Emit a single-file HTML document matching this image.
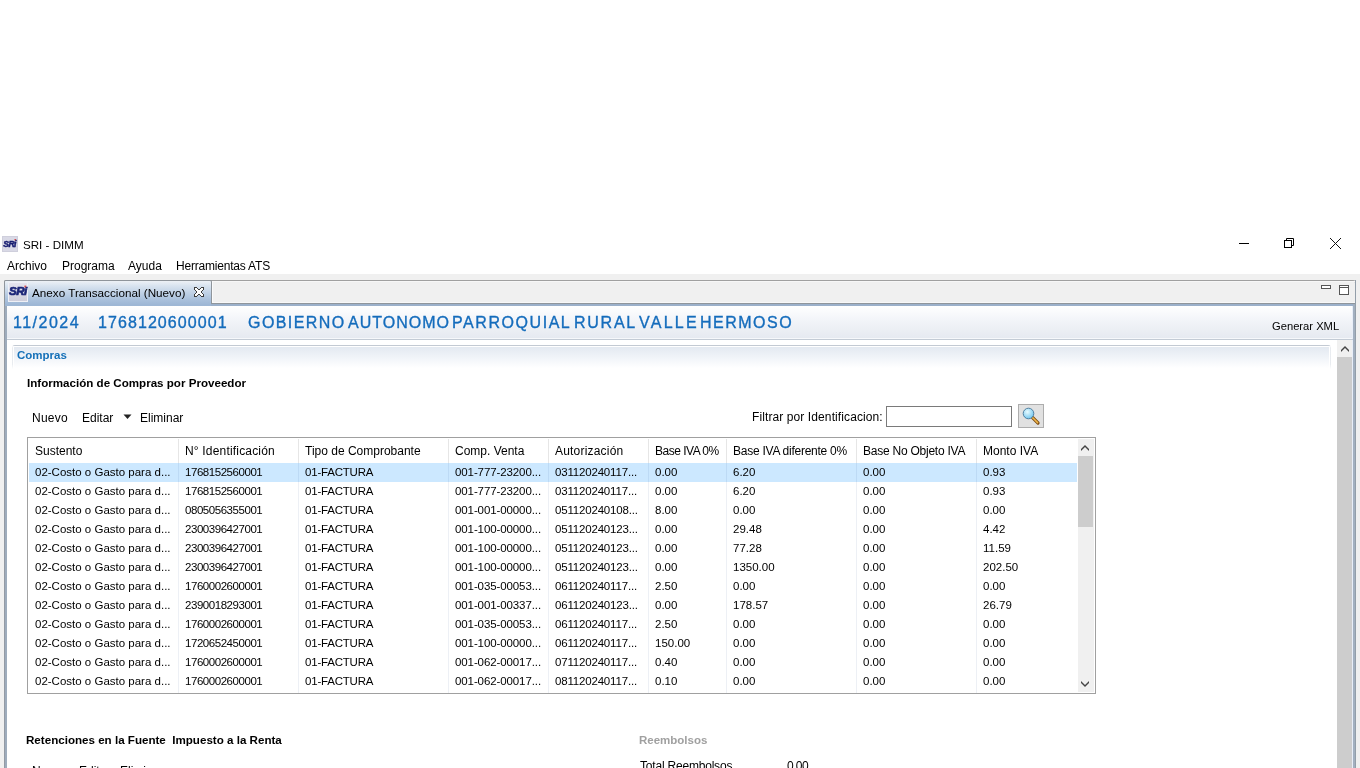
<!DOCTYPE html>
<html><head><meta charset="utf-8">
<style>
*{box-sizing:border-box;margin:0;padding:0}
html,body{width:1360px;height:768px;overflow:hidden;background:#fff}
.a,.cell,.hcell{will-change:transform}
body{position:relative;font-family:"Liberation Sans",sans-serif;font-size:12px;color:#000}
.a{position:absolute;white-space:pre;line-height:1}
.r{position:absolute}
.hw{top:315px;font-size:16px;color:#146cbc;letter-spacing:1px;-webkit-text-stroke:0.35px #146cbc}
#vscroll{position:absolute;left:1337px;top:340px;width:15px;height:428px;background:#f0f0f0}
#vthumb{position:absolute;left:1337px;top:357px;width:15px;height:411px;background:#cdcdcd}
.tbl{position:absolute;left:27px;top:437px;width:1069px;height:257px;border:1px solid #a0a0a0;background:#fff;overflow:hidden}
.row{position:absolute;left:1px;width:1048px;height:19px}
.sel{background:#cce8ff}
.cell{position:absolute;top:3px;font-size:11.5px;white-space:pre;line-height:13px}
.thead{position:absolute;left:0;top:0;width:1049px;height:25px;background:#fff}
.hcell{position:absolute;top:7px;font-size:12px;white-space:pre;line-height:13px}
.vsep{position:absolute;top:0;width:1px;height:255px;background:rgba(0,40,120,0.07)}
.hsep{position:absolute;top:1px;width:1px;height:24px;background:#e6e6e6}
.tscroll{position:absolute;left:1050px;top:1px;width:16px;height:253px;background:#f0f0f0}
.tthumb{position:absolute;left:0;top:17px;width:15px;height:71px;background:#cdcdcd}
</style></head><body>
<!-- title bar -->
<svg class="a" style="left:2px;top:236px" width="16" height="16" viewBox="0 0 16 16">
 <rect x="0" y="0" width="16" height="16" fill="#cfcfdc"/>
 <rect x="1" y="1" width="14" height="14" fill="#d9d9e6"/>
 <text x="7.6" y="10.6" text-anchor="middle" font-family="Liberation Sans" font-weight="bold" font-style="italic" font-size="8.6" fill="#161c70" stroke="#161c70" stroke-width="0.5" letter-spacing="-0.5">SRi</text>
 <rect x="12.5" y="3" width="1.4" height="1.4" fill="#d04040"/>
</svg>
<div class="a" style="left:23px;top:239px;font-size:11.6px">SRI - DIMM</div>
<svg class="a" style="left:1230px;top:232px" width="130" height="22" viewBox="0 0 130 22">
 <rect x="9" y="11" width="10" height="1" fill="#000"/>
 <rect x="54.5" y="8.5" width="7" height="7" fill="none" stroke="#000"/>
 <path d="M56.5 8.5V6.5H63.5V13.5H61.5" fill="none" stroke="#000"/>
 <g fill="#111" shape-rendering="crispEdges"><rect x="100" y="6" width="1" height="1"/><rect x="110" y="6" width="1" height="1"/><rect x="101" y="7" width="1" height="1"/><rect x="109" y="7" width="1" height="1"/><rect x="102" y="8" width="1" height="1"/><rect x="108" y="8" width="1" height="1"/><rect x="103" y="9" width="1" height="1"/><rect x="107" y="9" width="1" height="1"/><rect x="104" y="10" width="1" height="1"/><rect x="106" y="10" width="1" height="1"/><rect x="105" y="11" width="1" height="1"/><rect x="105" y="11" width="1" height="1"/><rect x="106" y="12" width="1" height="1"/><rect x="104" y="12" width="1" height="1"/><rect x="107" y="13" width="1" height="1"/><rect x="103" y="13" width="1" height="1"/><rect x="108" y="14" width="1" height="1"/><rect x="102" y="14" width="1" height="1"/><rect x="109" y="15" width="1" height="1"/><rect x="101" y="15" width="1" height="1"/><rect x="110" y="16" width="1" height="1"/><rect x="100" y="16" width="1" height="1"/></g>
</svg>
<!-- menu -->
<div class="a" style="left:7px;top:260px">Archivo</div>
<div class="a" style="left:62px;top:260px">Programa</div>
<div class="a" style="left:128px;top:260px">Ayuda</div>
<div class="a" style="left:176px;top:260px;letter-spacing:-0.2px">Herramientas ATS</div>

<div class="r" style="left:0;top:274px;width:1360px;height:494px;background:#f0f0f0"></div>
<!-- folder outline -->
<div class="r" style="left:4px;top:280px;width:1352px;height:488px;border:1px solid #a0a0a0;border-bottom:none;border-radius:2px 3px 0 0;background:#f0f0f0"></div>
<div class="r" style="left:5px;top:281px;width:1350px;height:1px;background:#f7f7f7"></div>
<div class="r" style="left:212px;top:281px;width:1px;height:22px;background:#fafafa"></div>
<div class="r" style="left:212px;top:302px;width:1143px;height:1px;background:#f8f8f8"></div>
<div class="r" style="left:5px;top:303px;width:1350px;height:1px;background:#8f959b"></div>
<div class="r" style="left:5px;top:304px;width:1350px;height:2px;background:#9bb0ca"></div>
<div class="r" style="left:4px;top:304px;width:1px;height:464px;background:#939aa4"></div>
<div class="r" style="left:5px;top:304px;width:2px;height:464px;background:#9eacbc"></div>
<div class="r" style="left:1355px;top:280px;width:1px;height:488px;background:#939ea9"></div>
<div class="r" style="left:1353px;top:304px;width:2px;height:464px;background:#a3b0c0"></div>
<div class="r" style="left:1352px;top:306px;width:1px;height:462px;background:#e8eef8"></div>
<!-- tab -->
<div class="r" style="left:4px;top:280px;width:208px;height:24px;border:1px solid #8f959b;border-bottom:none;border-radius:2px 2px 0 0;background:linear-gradient(#edf1f6,#d8e3ef 22%,#c3d4e7 48%,#aac1dc 80%,#9fb8d6)"></div>
<div class="r" style="left:5px;top:304px;width:206px;height:2px;background:#9eb7d5"></div>
<svg class="a" style="left:8px;top:282px" width="20" height="20" viewBox="0 0 20 20">
 <defs><linearGradient id="icog" x1="0" y1="0" x2="0" y2="1"><stop offset="0" stop-color="#e4e4ee"/><stop offset="1" stop-color="#cfcfdc"/></linearGradient></defs>
 <rect x="0" y="0" width="20" height="20" fill="#eef0f6"/>
 <rect x="1" y="1" width="18" height="18" fill="url(#icog)"/>
 <text x="9.8" y="13.4" text-anchor="middle" font-family="Liberation Sans" font-weight="bold" font-style="italic" font-size="11.5" fill="#1c2678" stroke="#1c2678" stroke-width="0.7" letter-spacing="-0.6">SRi</text>
 <rect x="16.4" y="3.6" width="1.8" height="1.8" fill="#d84848"/>
</svg>
<div class="a" style="left:32px;top:287px;font-size:11.7px">Anexo Transaccional (Nuevo)</div>
<svg class="a" style="left:194px;top:287px" width="10" height="10" viewBox="0 0 10 10" shape-rendering="crispEdges"><rect x="0" y="0" width="1" height="1" fill="#3c3c3c"/><rect x="1" y="0" width="1" height="1" fill="#3c3c3c"/><rect x="2" y="0" width="1" height="1" fill="#3c3c3c"/><rect x="7" y="0" width="1" height="1" fill="#3c3c3c"/><rect x="8" y="0" width="1" height="1" fill="#3c3c3c"/><rect x="9" y="0" width="1" height="1" fill="#3c3c3c"/><rect x="0" y="1" width="1" height="1" fill="#3c3c3c"/><rect x="1" y="1" width="1" height="1" fill="#fff"/><rect x="2" y="1" width="1" height="1" fill="#fff"/><rect x="3" y="1" width="1" height="1" fill="#3c3c3c"/><rect x="6" y="1" width="1" height="1" fill="#3c3c3c"/><rect x="7" y="1" width="1" height="1" fill="#fff"/><rect x="8" y="1" width="1" height="1" fill="#fff"/><rect x="9" y="1" width="1" height="1" fill="#3c3c3c"/><rect x="0" y="2" width="1" height="1" fill="#3c3c3c"/><rect x="1" y="2" width="1" height="1" fill="#fff"/><rect x="2" y="2" width="1" height="1" fill="#fff"/><rect x="3" y="2" width="1" height="1" fill="#fff"/><rect x="4" y="2" width="1" height="1" fill="#3c3c3c"/><rect x="5" y="2" width="1" height="1" fill="#3c3c3c"/><rect x="6" y="2" width="1" height="1" fill="#fff"/><rect x="7" y="2" width="1" height="1" fill="#fff"/><rect x="8" y="2" width="1" height="1" fill="#fff"/><rect x="9" y="2" width="1" height="1" fill="#3c3c3c"/><rect x="1" y="3" width="1" height="1" fill="#3c3c3c"/><rect x="2" y="3" width="1" height="1" fill="#fff"/><rect x="3" y="3" width="1" height="1" fill="#fff"/><rect x="4" y="3" width="1" height="1" fill="#fff"/><rect x="5" y="3" width="1" height="1" fill="#fff"/><rect x="6" y="3" width="1" height="1" fill="#fff"/><rect x="7" y="3" width="1" height="1" fill="#fff"/><rect x="8" y="3" width="1" height="1" fill="#3c3c3c"/><rect x="2" y="4" width="1" height="1" fill="#3c3c3c"/><rect x="3" y="4" width="1" height="1" fill="#fff"/><rect x="4" y="4" width="1" height="1" fill="#fff"/><rect x="5" y="4" width="1" height="1" fill="#fff"/><rect x="6" y="4" width="1" height="1" fill="#fff"/><rect x="7" y="4" width="1" height="1" fill="#3c3c3c"/><rect x="2" y="5" width="1" height="1" fill="#3c3c3c"/><rect x="3" y="5" width="1" height="1" fill="#fff"/><rect x="4" y="5" width="1" height="1" fill="#fff"/><rect x="5" y="5" width="1" height="1" fill="#fff"/><rect x="6" y="5" width="1" height="1" fill="#fff"/><rect x="7" y="5" width="1" height="1" fill="#3c3c3c"/><rect x="1" y="6" width="1" height="1" fill="#3c3c3c"/><rect x="2" y="6" width="1" height="1" fill="#fff"/><rect x="3" y="6" width="1" height="1" fill="#fff"/><rect x="4" y="6" width="1" height="1" fill="#fff"/><rect x="5" y="6" width="1" height="1" fill="#fff"/><rect x="6" y="6" width="1" height="1" fill="#fff"/><rect x="7" y="6" width="1" height="1" fill="#fff"/><rect x="8" y="6" width="1" height="1" fill="#3c3c3c"/><rect x="0" y="7" width="1" height="1" fill="#3c3c3c"/><rect x="1" y="7" width="1" height="1" fill="#fff"/><rect x="2" y="7" width="1" height="1" fill="#fff"/><rect x="3" y="7" width="1" height="1" fill="#fff"/><rect x="4" y="7" width="1" height="1" fill="#3c3c3c"/><rect x="5" y="7" width="1" height="1" fill="#3c3c3c"/><rect x="6" y="7" width="1" height="1" fill="#fff"/><rect x="7" y="7" width="1" height="1" fill="#fff"/><rect x="8" y="7" width="1" height="1" fill="#fff"/><rect x="9" y="7" width="1" height="1" fill="#3c3c3c"/><rect x="0" y="8" width="1" height="1" fill="#3c3c3c"/><rect x="1" y="8" width="1" height="1" fill="#fff"/><rect x="2" y="8" width="1" height="1" fill="#fff"/><rect x="3" y="8" width="1" height="1" fill="#3c3c3c"/><rect x="6" y="8" width="1" height="1" fill="#3c3c3c"/><rect x="7" y="8" width="1" height="1" fill="#fff"/><rect x="8" y="8" width="1" height="1" fill="#fff"/><rect x="9" y="8" width="1" height="1" fill="#3c3c3c"/><rect x="0" y="9" width="1" height="1" fill="#3c3c3c"/><rect x="1" y="9" width="1" height="1" fill="#3c3c3c"/><rect x="2" y="9" width="1" height="1" fill="#3c3c3c"/><rect x="7" y="9" width="1" height="1" fill="#3c3c3c"/><rect x="8" y="9" width="1" height="1" fill="#3c3c3c"/><rect x="9" y="9" width="1" height="1" fill="#3c3c3c"/></svg>
<svg class="a" style="left:1320px;top:284px" width="30" height="12" viewBox="0 0 30 12">
 <rect x="1.5" y="1.5" width="9" height="3" fill="#fff" stroke="#555" stroke-width="1"/>
 <rect x="19.5" y="1.5" width="9" height="9" fill="#fff" stroke="#555" stroke-width="1"/>
 <rect x="19.5" y="3" width="9" height="1" fill="#555"/>
</svg>
<!-- content -->
<div class="r" style="left:7px;top:306px;width:1345px;height:462px;background:#fff"></div>
<div class="r" style="left:7px;top:306px;width:1345px;height:33px;background:linear-gradient(#ffffff,#f3f5f9 40%,#e5e9f0)"></div>
<div class="r" style="left:7px;top:338px;width:1345px;height:1px;background:#f6f8fb"></div><div class="r" style="left:7px;top:339px;width:1346px;height:1px;background:#c3cbd5"></div>
<div class="a hw" style="left:13px;letter-spacing:1.50px">11/2024</div>
<div class="a hw" style="left:98px;letter-spacing:1.08px">1768120600001</div>
<div class="a hw" style="left:248px;letter-spacing:1.43px">GOBIERNO</div>
<div class="a hw" style="left:348px;letter-spacing:1.00px">AUTONOMO</div>
<div class="a hw" style="left:452px;letter-spacing:1.56px">PARROQUIAL</div>
<div class="a hw" style="left:574px;letter-spacing:1.75px">RURAL</div>
<div class="a hw" style="left:639px;letter-spacing:2.25px">VALLE</div>
<div class="a hw" style="left:700px;letter-spacing:1.50px">HERMOSO</div>
<div class="a" style="left:1272px;top:321px;font-size:11.2px">Generar XML</div>

<div class="r" style="left:12px;top:345px;width:1319px;height:24px;border-top:1px solid #c3cad3;border-radius:3px 3px 0 0;background:linear-gradient(90deg,#d2d8e0,rgba(255,255,255,0) 1px,rgba(255,255,255,0) calc(100% - 1px),#d2d8e0)"></div>
<div class="r" style="left:12px;top:346px;width:1319px;height:23px;background:linear-gradient(#fff,rgba(255,255,255,0) 2px,rgba(255,255,255,0) 18px,#fff)"></div>
<div class="r" style="left:14px;top:347px;width:1315px;height:21px;background:linear-gradient(#e3e9f1,#f3f6fa 60%,#fff)"></div>
<div class="a" style="left:17px;top:350px;font-size:11.5px;font-weight:bold;color:#1570b8">Compras</div>
<div class="a" style="left:27px;top:377px;font-size:11.6px;font-weight:bold">Información de Compras por Proveedor</div>


<div class="a" style="left:32px;top:412px;letter-spacing:0.25px">Nuevo</div>
<div class="a" style="left:82px;top:412px">Editar</div>
<svg class="a" style="left:123px;top:414px" width="9" height="6" viewBox="0 0 9 6"><path d="M0.5 0.5H8.5L4.5 5Z" fill="#222"/></svg>
<div class="a" style="left:140px;top:412px">Eliminar</div>
<div class="a" style="left:752px;top:411px;letter-spacing:0.1px">Filtrar por Identificacion:</div>
<div style="position:absolute;left:886px;top:406px;width:126px;height:21px;border:1px solid #7a7a7a;background:#fff"></div>
<div style="position:absolute;left:1018px;top:404px;width:26px;height:24px;border:1px solid #adadad;background:#e1e1e1"></div>
<svg class="a" style="left:1018px;top:404px" width="26" height="24" viewBox="0 0 26 24">
 <defs><radialGradient id="lens" cx="0.4" cy="0.35" r="0.7"><stop offset="0" stop-color="#e8fbff"/><stop offset="1" stop-color="#6cc4ee"/></radialGradient></defs>
 <path d="M14.5 13.5L20 19" stroke="#7a4a10" stroke-width="3.2" stroke-linecap="round"/>
 <path d="M14.8 13.8L19.6 18.6" stroke="#f0b64a" stroke-width="1.6" stroke-linecap="round"/>
 <circle cx="10.5" cy="9.5" r="5.3" fill="url(#lens)" stroke="#4f7fa0" stroke-width="1"/>
</svg>
<div class="tbl">
<div class="row sel" style="top:25px"><div class="cell" style="left:6px">02-Costo o Gasto para d...</div><div class="cell" style="left:156px;letter-spacing:-0.45px">1768152560001</div><div class="cell" style="left:276px;letter-spacing:-0.2px">01-FACTURA</div><div class="cell" style="left:426px;letter-spacing:-0.1px">001-777-23200...</div><div class="cell" style="left:526px;letter-spacing:-0.18px">031120240117...</div><div class="cell" style="left:626px">0.00</div><div class="cell" style="left:704px">6.20</div><div class="cell" style="left:834px">0.00</div><div class="cell" style="left:954px">0.93</div></div>
<div class="row" style="top:44px"><div class="cell" style="left:6px">02-Costo o Gasto para d...</div><div class="cell" style="left:156px;letter-spacing:-0.45px">1768152560001</div><div class="cell" style="left:276px;letter-spacing:-0.2px">01-FACTURA</div><div class="cell" style="left:426px;letter-spacing:-0.1px">001-777-23200...</div><div class="cell" style="left:526px;letter-spacing:-0.18px">031120240117...</div><div class="cell" style="left:626px">0.00</div><div class="cell" style="left:704px">6.20</div><div class="cell" style="left:834px">0.00</div><div class="cell" style="left:954px">0.93</div></div>
<div class="row" style="top:63px"><div class="cell" style="left:6px">02-Costo o Gasto para d...</div><div class="cell" style="left:156px;letter-spacing:-0.45px">0805056355001</div><div class="cell" style="left:276px;letter-spacing:-0.2px">01-FACTURA</div><div class="cell" style="left:426px;letter-spacing:-0.1px">001-001-00000...</div><div class="cell" style="left:526px;letter-spacing:-0.18px">051120240108...</div><div class="cell" style="left:626px">8.00</div><div class="cell" style="left:704px">0.00</div><div class="cell" style="left:834px">0.00</div><div class="cell" style="left:954px">0.00</div></div>
<div class="row" style="top:82px"><div class="cell" style="left:6px">02-Costo o Gasto para d...</div><div class="cell" style="left:156px;letter-spacing:-0.45px">2300396427001</div><div class="cell" style="left:276px;letter-spacing:-0.2px">01-FACTURA</div><div class="cell" style="left:426px;letter-spacing:-0.1px">001-100-00000...</div><div class="cell" style="left:526px;letter-spacing:-0.18px">051120240123...</div><div class="cell" style="left:626px">0.00</div><div class="cell" style="left:704px">29.48</div><div class="cell" style="left:834px">0.00</div><div class="cell" style="left:954px">4.42</div></div>
<div class="row" style="top:101px"><div class="cell" style="left:6px">02-Costo o Gasto para d...</div><div class="cell" style="left:156px;letter-spacing:-0.45px">2300396427001</div><div class="cell" style="left:276px;letter-spacing:-0.2px">01-FACTURA</div><div class="cell" style="left:426px;letter-spacing:-0.1px">001-100-00000...</div><div class="cell" style="left:526px;letter-spacing:-0.18px">051120240123...</div><div class="cell" style="left:626px">0.00</div><div class="cell" style="left:704px">77.28</div><div class="cell" style="left:834px">0.00</div><div class="cell" style="left:954px">11.59</div></div>
<div class="row" style="top:120px"><div class="cell" style="left:6px">02-Costo o Gasto para d...</div><div class="cell" style="left:156px;letter-spacing:-0.45px">2300396427001</div><div class="cell" style="left:276px;letter-spacing:-0.2px">01-FACTURA</div><div class="cell" style="left:426px;letter-spacing:-0.1px">001-100-00000...</div><div class="cell" style="left:526px;letter-spacing:-0.18px">051120240123...</div><div class="cell" style="left:626px">0.00</div><div class="cell" style="left:704px">1350.00</div><div class="cell" style="left:834px">0.00</div><div class="cell" style="left:954px">202.50</div></div>
<div class="row" style="top:139px"><div class="cell" style="left:6px">02-Costo o Gasto para d...</div><div class="cell" style="left:156px;letter-spacing:-0.45px">1760002600001</div><div class="cell" style="left:276px;letter-spacing:-0.2px">01-FACTURA</div><div class="cell" style="left:426px;letter-spacing:-0.1px">001-035-00053...</div><div class="cell" style="left:526px;letter-spacing:-0.18px">061120240117...</div><div class="cell" style="left:626px">2.50</div><div class="cell" style="left:704px">0.00</div><div class="cell" style="left:834px">0.00</div><div class="cell" style="left:954px">0.00</div></div>
<div class="row" style="top:158px"><div class="cell" style="left:6px">02-Costo o Gasto para d...</div><div class="cell" style="left:156px;letter-spacing:-0.45px">2390018293001</div><div class="cell" style="left:276px;letter-spacing:-0.2px">01-FACTURA</div><div class="cell" style="left:426px;letter-spacing:-0.1px">001-001-00337...</div><div class="cell" style="left:526px;letter-spacing:-0.18px">061120240123...</div><div class="cell" style="left:626px">0.00</div><div class="cell" style="left:704px">178.57</div><div class="cell" style="left:834px">0.00</div><div class="cell" style="left:954px">26.79</div></div>
<div class="row" style="top:177px"><div class="cell" style="left:6px">02-Costo o Gasto para d...</div><div class="cell" style="left:156px;letter-spacing:-0.45px">1760002600001</div><div class="cell" style="left:276px;letter-spacing:-0.2px">01-FACTURA</div><div class="cell" style="left:426px;letter-spacing:-0.1px">001-035-00053...</div><div class="cell" style="left:526px;letter-spacing:-0.18px">061120240117...</div><div class="cell" style="left:626px">2.50</div><div class="cell" style="left:704px">0.00</div><div class="cell" style="left:834px">0.00</div><div class="cell" style="left:954px">0.00</div></div>
<div class="row" style="top:196px"><div class="cell" style="left:6px">02-Costo o Gasto para d...</div><div class="cell" style="left:156px;letter-spacing:-0.45px">1720652450001</div><div class="cell" style="left:276px;letter-spacing:-0.2px">01-FACTURA</div><div class="cell" style="left:426px;letter-spacing:-0.1px">001-100-00000...</div><div class="cell" style="left:526px;letter-spacing:-0.18px">061120240117...</div><div class="cell" style="left:626px">150.00</div><div class="cell" style="left:704px">0.00</div><div class="cell" style="left:834px">0.00</div><div class="cell" style="left:954px">0.00</div></div>
<div class="row" style="top:215px"><div class="cell" style="left:6px">02-Costo o Gasto para d...</div><div class="cell" style="left:156px;letter-spacing:-0.45px">1760002600001</div><div class="cell" style="left:276px;letter-spacing:-0.2px">01-FACTURA</div><div class="cell" style="left:426px;letter-spacing:-0.1px">001-062-00017...</div><div class="cell" style="left:526px;letter-spacing:-0.18px">071120240117...</div><div class="cell" style="left:626px">0.40</div><div class="cell" style="left:704px">0.00</div><div class="cell" style="left:834px">0.00</div><div class="cell" style="left:954px">0.00</div></div>
<div class="row" style="top:234px"><div class="cell" style="left:6px">02-Costo o Gasto para d...</div><div class="cell" style="left:156px;letter-spacing:-0.45px">1760002600001</div><div class="cell" style="left:276px;letter-spacing:-0.2px">01-FACTURA</div><div class="cell" style="left:426px;letter-spacing:-0.1px">001-062-00017...</div><div class="cell" style="left:526px;letter-spacing:-0.18px">081120240117...</div><div class="cell" style="left:626px">0.10</div><div class="cell" style="left:704px">0.00</div><div class="cell" style="left:834px">0.00</div><div class="cell" style="left:954px">0.00</div></div>
<div class="vsep" style="left:150px"></div>
<div class="vsep" style="left:270px"></div>
<div class="vsep" style="left:420px"></div>
<div class="vsep" style="left:520px"></div>
<div class="vsep" style="left:620px"></div>
<div class="vsep" style="left:698px"></div>
<div class="vsep" style="left:828px"></div>
<div class="vsep" style="left:948px"></div>
<div class="thead">
<div class="hsep" style="left:150px"></div>
<div class="hsep" style="left:270px"></div>
<div class="hsep" style="left:420px"></div>
<div class="hsep" style="left:520px"></div>
<div class="hsep" style="left:620px"></div>
<div class="hsep" style="left:698px"></div>
<div class="hsep" style="left:828px"></div>
<div class="hsep" style="left:948px"></div>
<div class="hcell" style="left:7px">Sustento</div>
<div class="hcell" style="left:157px;letter-spacing:0.18px">N° Identificación</div>
<div class="hcell" style="left:277px">Tipo de Comprobante</div>
<div class="hcell" style="left:427px">Comp. Venta</div>
<div class="hcell" style="left:527px;letter-spacing:0.2px">Autorización</div>
<div class="hcell" style="left:627px;letter-spacing:-0.5px">Base IVA 0%</div>
<div class="hcell" style="left:705px;letter-spacing:-0.25px">Base IVA diferente 0%</div>
<div class="hcell" style="left:835px;letter-spacing:-0.24px">Base No Objeto IVA</div>
<div class="hcell" style="left:955px">Monto IVA</div>
</div>
<div class="tscroll"><svg style="position:absolute;left:3px;top:6px" width="8" height="6" viewBox="0 0 8 6"><path d="M0 4L4 0L8 4V6L4 2L0 6Z" fill="#444"/></svg><div class="tthumb"></div><svg style="position:absolute;left:3px;top:242px" width="8" height="6" viewBox="0 0 8 6"><path d="M0 2L4 6L8 2V0L4 4L0 0Z" fill="#444"/></svg></div>
</div>
<div class="a" style="left:26px;top:734px;font-size:11.6px;font-weight:bold">Retenciones en la Fuente  Impuesto a la Renta</div>
<div class="a" style="left:32px;top:765px">Nuevo</div>
<div class="a" style="left:79px;top:765px">Editar</div>
<div class="a" style="left:120px;top:765px">Eliminar</div>
<div class="a" style="left:639px;top:735px;font-size:11.5px;font-weight:bold;color:#a0a0a0">Reembolsos</div>
<div class="a" style="left:640px;top:760px;letter-spacing:-0.2px">Total Reembolsos</div>
<div class="a" style="left:787px;top:760px;letter-spacing:-0.6px">0.00</div>
<div id="vscroll"></div>
<div id="vthumb"></div>
<svg class="a" style="left:1341px;top:346px" width="8" height="6" viewBox="0 0 8 6"><path d="M0 4L4 0L8 4V6L4 2L0 6Z" fill="#444"/></svg>
</body></html>
